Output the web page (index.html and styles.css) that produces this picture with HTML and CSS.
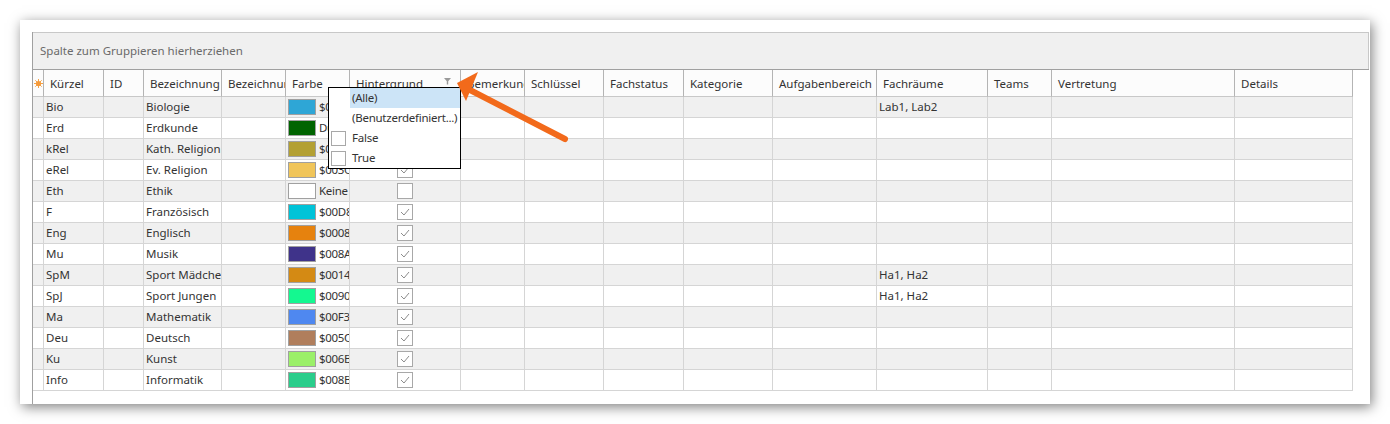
FILE: index.html
```html
<!DOCTYPE html>
<html lang="de">
<head>
<meta charset="utf-8">
<title>Fächer</title>
<link rel="stylesheet" href="styles.css">
</head>
<body>
<div class="page">
  <div class="window">
    <div class="gridbox">
      <div class="group">Spalte zum Gruppieren hierherziehen</div>
      <div class="header">
        <div class="cols">
          <div class="hc ind"><svg class="sun" width="9" height="9" viewBox="0 0 9 9"><g stroke="#f7a448" stroke-width="1"><line x1="4.5" y1="0" x2="4.5" y2="9"/><line x1="0" y1="4.5" x2="9" y2="4.5"/><line x1="1.3" y1="1.3" x2="7.7" y2="7.7"/><line x1="7.7" y1="1.3" x2="1.3" y2="7.7"/></g><circle cx="4.5" cy="4.5" r="2.6" fill="#f59a3a"/></svg></div>
          <div class="hc">Kürzel</div>
          <div class="hc">ID</div>
          <div class="hc">Bezeichnung</div>
          <div class="hc">Bezeichnung2</div>
          <div class="hc">Farbe</div>
          <div class="hc hint"><span>Hintergrund</span><svg class="funnel" width="7" height="7" viewBox="0 0 7 7"><path d="M0 0H7L4.2 3.2V6.5H2.8V3.2Z" fill="#9a9a9a"/></svg></div>
          <div class="hc">Bemerkung</div>
          <div class="hc">Schlüssel</div>
          <div class="hc">Fachstatus</div>
          <div class="hc">Kategorie</div>
          <div class="hc">Aufgabenbereich</div>
          <div class="hc">Fachräume</div>
          <div class="hc">Teams</div>
          <div class="hc">Vertretung</div>
          <div class="hc">Details</div>
        </div>
      </div>
      <div class="body" id="rows"></div>
    </div>

    <div class="dropdown">
      <div class="item sel"><span class="box none"></span><span class="lbl">(Alle)</span></div>
      <div class="item"><span class="box none"></span><span class="lbl">(Benutzerdefiniert...)</span></div>
      <div class="item"><span class="box"></span><span class="lbl">False</span></div>
      <div class="item"><span class="box"></span><span class="lbl">True</span></div>
    </div>

    <svg class="arrow" width="1350" height="384" viewBox="0 0 1350 384">
      <line x1="545" y1="119" x2="450" y2="70" stroke="#f26a1b" stroke-width="6" stroke-linecap="round"/>
      <polygon points="437,63 458,52 446,81" fill="#f26a1b"/>
    </svg>
  </div>
</div>
<script src="app.js"></script>
</body>
</html>
```
FILE: app.js
```js
var data = [
  ["Bio","Biologie","#2ea6d6","$00D6A62E",true,"Lab1, Lab2"],
  ["Erd","Erdkunde","#006400","Dunkelgrün",true,""],
  ["kRel","Kath. Religion","#b3a033","$0033A0B3",true,""],
  ["eRel","Ev. Religion","#f0c55a","$003CC5F0",true,""],
  ["Eth","Ethik","#ffffff","Keine",false,""],
  ["F","Französisch","#00c3d8","$00D8C300",true,""],
  ["Eng","Englisch","#e6820e","$000882E6",true,""],
  ["Mu","Musik","#3f338a","$008A333F",true,""],
  ["SpM","Sport Mädchen","#d48a14","$00148AD4",true,"Ha1, Ha2"],
  ["SpJ","Sport Jungen","#14f890","$0090F814",true,"Ha1, Ha2"],
  ["Ma","Mathematik","#4f88f0","$00F3884F",true,""],
  ["Deu","Deutsch","#b07e5c","$005C7EB0",true,""],
  ["Ku","Kunst","#9bf069","$006BF09B",true,""],
  ["Info","Informatik","#2acd8b","$008BCD2A",true,""]
];
var html = "";
var check = '<svg width="10" height="8" viewBox="0 0 10 8"><path d="M1 4L4 7L9 1" fill="none" stroke="#8c8c8c" stroke-width="1"/></svg>';
data.forEach(function (r, i) {
  html += '<div class="cols row ' + (i % 2 === 0 ? 'alt' : '') + '">' +
    '<div class="c ind"></div>' +
    '<div class="c">' + r[0] + '</div>' +
    '<div class="c"></div>' +
    '<div class="c">' + r[1] + '</div>' +
    '<div class="c"></div>' +
    '<div class="c farbe"><span class="sw" style="background:' + r[2] + '"></span><span class="ft">' + r[3] + '</span></div>' +
    '<div class="c chk"><span class="cb">' + (r[4] ? check : '') + '</span></div>' +
    '<div class="c"></div><div class="c"></div><div class="c"></div><div class="c"></div><div class="c"></div>' +
    '<div class="c">' + r[5] + '</div>' +
    '<div class="c"></div><div class="c"></div><div class="c"></div>' +
    '</div>';
});
document.getElementById("rows").innerHTML = html;
```
FILE: styles.css
```css
* { box-sizing: border-box; }
body {
  margin: 0;
  background: #ffffff;
  font-family: "Noto Sans", "DejaVu Sans", sans-serif;
  font-size: 11.5px;
  color: #333333;
}
.page { padding: 20px; }
.window {
  position: relative;
  width: 1350px;
  height: 384px;
  background: #ffffff;
  box-shadow: 2px 3px 12px rgba(0, 0, 0, 0.5);
  padding: 12px 1px 0 12px;
  overflow: hidden;
}
.gridbox {
  height: 100%;
  border-left: 1px solid #a0a0a0;
}
.group {
  height: 37px;
  background: #f0f0f0;
  border-top: 1px solid #c8c8c8;
  border-right: 1px solid #c8c8c8;
  display: flex;
  align-items: center;
  padding: 0 0 2px 7px;
  color: #6a6a6a;
}
.header {
  border-top: 1px solid #a0a0a0;
}
.cols {
  display: grid;
  width: 1320px;
  grid-template-columns: 11px 60px 40px 78px 64px 64px 111px 64px 79px 80px 89px 104px 111px 64px 183px 118px;
}
.hc {
  height: 27px;
  background: #fcfcfc;
  border-right: 1px solid #b4b4b4;
  border-bottom: 1px solid #c8c8c8;
  display: flex;
  align-items: center;
  padding-left: 6px;
  white-space: nowrap;
  overflow: hidden;
}
.hc.ind { padding-left: 1px; }
.hint { justify-content: space-between; padding-right: 9px; }
.funnel { flex: none; margin-top: -4px; }
.row { background: #ffffff; }
.row.alt { background: #f0f0f0; }
.c {
  height: 21px;
  border-right: 1px solid #d5d5d5;
  border-bottom: 1px solid #d5d5d5;
  display: flex;
  align-items: center;
  padding: 0 0 1px 2px;
  white-space: nowrap;
  overflow: hidden;
}
.farbe { padding: 0 0 0 2px; gap: 3px; }
.sw {
  flex: none;
  width: 28px;
  height: 16px;
  border: 1px solid #a0a0a0;
}
.ft { overflow: hidden; text-overflow: clip; letter-spacing: -0.3px; margin-top: -1px; }
.chk { justify-content: center; padding: 0; }
.cb {
  width: 16px;
  height: 16px;
  border: 1px solid #a8a8a8;
  background: #ffffff;
  display: flex;
  align-items: center;
  justify-content: center;
}
.dropdown {
  position: absolute;
  left: 308px;
  top: 67px;
  width: 133px;
  height: 82px;
  background: #ffffff;
  border: 1px solid #000000;
  z-index: 2;
}
.item {
  height: 20px;
  display: flex;
  align-items: center;
}
.item .box {
  flex: none;
  width: 15px;
  height: 15px;
  margin: 0 4px 0 2px;
  border: 1px solid #a8a8a8;
}
.item .box.none { border-color: transparent; }
.item .lbl {
  flex: 1;
  height: 100%;
  display: flex;
  align-items: center;
  padding: 0 0 1px 2px;
  white-space: nowrap;
  letter-spacing: -0.25px;
}
.item.sel .lbl { background: #cce4f7; }
.arrow {
  position: absolute;
  left: 0;
  top: 0;
  z-index: 3;
  pointer-events: none;
}
```
